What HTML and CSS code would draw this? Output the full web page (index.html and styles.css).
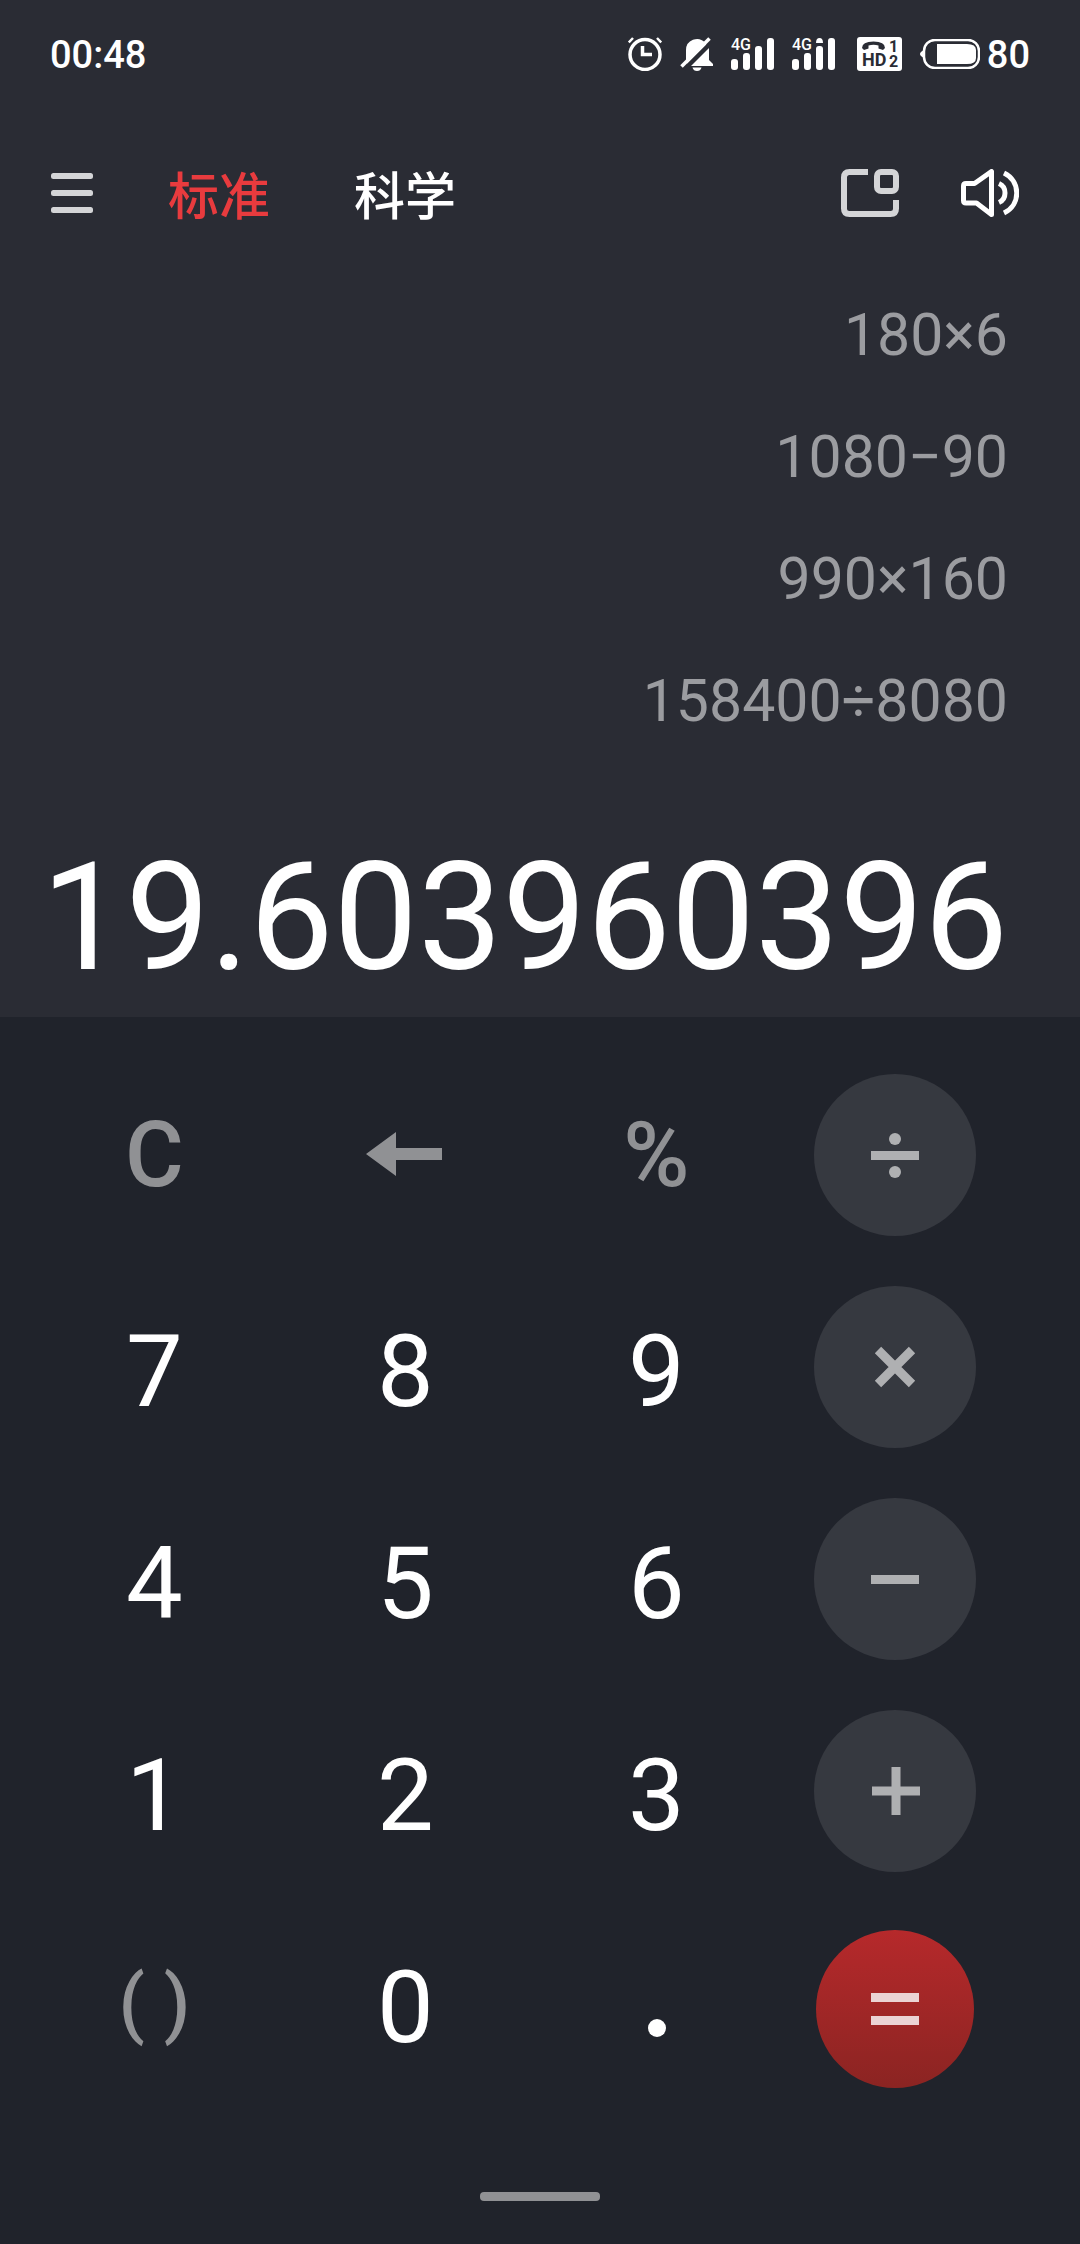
FILE: index.html
```html
<!DOCTYPE html>
<html lang="zh-CN">
<head>
    <meta charset="UTF-8">
    <meta name="viewport" content="width=device-width, initial-scale=1.0">
    <title>计算器</title>
    <link rel="stylesheet" href="styles.css">
</head>
<body>
    <div class="status-bar">
        <time class="clock">00:48</time>
        <div class="status-icons">
            <svg width="34" height="34" viewBox="0 0 34 34" fill="none" stroke="#fff">
                <circle cx="17" cy="17.5" r="15" stroke-width="3.5"/>
                <path d="M14.5 9v8.5H24" stroke-width="3.5"/>
                <path d="M.8 5.5L5 1M33.2 5.5L29 1" stroke-width="2.5"/>
            </svg>
            <svg width="33" height="34" viewBox="0 0 33 34">
                <path d="M6 23V13a11 11 0 0 1 19-7.500l4 6V23l4 4v2H8z" fill="#fff"/>
                <path d="M12.500 30.500h9q-1 3.500-4.500 3.500t-4.500-3.500z" fill="#fff"/>
                <path d="M4 32.800L34 2.800" stroke="#2a2c34" stroke-width="4.500"/>
                <path d="M1.500 29.500L29.500 1.500" stroke="#fff" stroke-width="3.500"/>
            </svg>
            <svg width="43" height="40" viewBox="0 -3 43 40" fill="#fff">
                <text class="net" x="0" y="13">4G</text>
                <rect x="0" y="22" width="7" height="11" rx="3"/>
                <rect x="12" y="16" width="7" height="17" rx="3"/>
                <rect x="24" y="9" width="7" height="24" rx="3"/>
                <rect x="36" y="1" width="7" height="32" rx="3"/>
            </svg>
            <svg width="43" height="40" viewBox="0 -3 43 40" fill="#fff">
                <text class="net" x="0" y="13">4G</text>
                <rect x="0" y="22" width="7" height="11" rx="3"/>
                <rect x="12" y="16" width="7" height="17" rx="3"/>
                <path d="M24 6q0-5 3.500-5t3.500 5z"/>
                <rect x="24" y="9" width="7" height="24" rx="3"/>
                <rect x="36" y="1" width="7" height="32" rx="3"/>
            </svg>
            <svg class="hd" width="45" height="34" viewBox="0 0 45 34">
                <rect width="45" height="34" rx="3" fill="#fff"/>
                <path d="M5 11q0-6.500 11.500-6.500T28 11l-2 2-4.500-1.500V8.500q-5-1.500-10 0v3L7 13z" fill="#2a2c34"/>
                <text class="volte" x="5" y="29">HD</text>
                <text class="sim" x="32" y="15">1</text>
                <text class="sim" x="32" y="30">2</text>
            </svg>
            <div class="battery">
                <svg width="60" height="30" viewBox="0 0 60 30">
                    <path d="M4 11q-4 2-4 4t4 4z" fill="#fff"/>
                    <rect x="4" y="1" width="55" height="28" rx="11" fill="none" stroke="#fff" stroke-width="2.500"/>
                    <path d="M17 5h30q9 0 9 6v8q0 6-9 6H17z" fill="#fff"/>
                </svg>
                <span class="level">80</span>
            </div>
        </div>
    </div>

    <header class="toolbar">
        <button class="icon-btn menu" aria-label="菜单">
            <svg width="42" height="40" viewBox="0 0 42 40" fill="#d4d5d7">
                <rect y="0" width="42" height="6" rx="2.500"/>
                <rect y="17" width="42" height="6" rx="2.500"/>
                <rect y="34" width="42" height="6" rx="2.500"/>
            </svg>
        </button>
        <nav class="tabs">
            <button class="tab active">标准</button>
            <button class="tab">科学</button>
        </nav>
        <div class="actions">
            <button class="icon-btn" aria-label="小窗">
                <svg width="58" height="48" viewBox="0 0 58 48" fill="none" stroke="#d4d5d7" stroke-width="6">
                    <path d="M27 3H8.500Q3 3 3 8.500v31Q3 45 8.500 45h41q5.500 0 5.500-5.500V31"/>
                    <rect x="36" y="3" width="19" height="19" rx="4"/>
                </svg>
            </button>
            <button class="icon-btn" aria-label="声音">
                <svg width="58" height="48" viewBox="0 0 58 48" fill="none" stroke="#fff" stroke-width="5">
                    <path d="M2.500 17q0-2.500 2.500-2.500h8.500L30.500 2.500v43L15.500 34H5q-2.500 0-2.500-2.500z" stroke-linejoin="round"/>
                    <path d="M38 14.500c8 3.500 8 15.500 0 19M43 4c17 8 17 32 0 40"/>
                </svg>
            </button>
        </div>
    </header>

    <main class="calculator">
        <section class="display">
            <ul class="history">
                <li>180×6</li>
                <li>1080−90</li>
                <li>990×160</li>
                <li>158400÷8080</li>
            </ul>
            <output class="result">19.603960396</output>
        </section>

        <section class="keypad">
            <button class="key fn">C</button>
            <button class="key fn" aria-label="退格">
                <svg width="80" height="46" viewBox="0 0 80 46"><path d="M0 22L30 0v16h46v12H30v16z" fill="#909194"/></svg>
            </button>
            <button class="key fn">%</button>
            <button class="key op" aria-label="除">
                <svg width="48" height="48" viewBox="0 0 48 48" fill="#afb0b2">
                    <rect y="20" width="48" height="9"/>
                    <circle cx="24" cy="8" r="6"/>
                    <circle cx="24" cy="41" r="6"/>
                </svg>
            </button>

            <button class="key">7</button>
            <button class="key">8</button>
            <button class="key">9</button>
            <button class="key op" aria-label="乘">
                <svg width="48" height="48" viewBox="0 0 48 48"><path d="M7 7l34 34M41 7L7 41" stroke="#afb0b2" stroke-width="9"/></svg>
            </button>

            <button class="key">4</button>
            <button class="key">5</button>
            <button class="key">6</button>
            <button class="key op" aria-label="减">
                <svg width="48" height="48" viewBox="0 0 48 48"><rect y="20" width="48" height="9" fill="#afb0b2"/></svg>
            </button>

            <button class="key">1</button>
            <button class="key">2</button>
            <button class="key">3</button>
            <button class="key op" aria-label="加">
                <svg width="50" height="48" viewBox="0 0 50 48"><path d="M2 24h48M26 0v48" stroke="#afb0b2" stroke-width="9"/></svg>
            </button>

            <button class="key paren">( )</button>
            <button class="key">0</button>
            <button class="key dot" aria-label="小数点">
                <svg width="18" height="18" viewBox="0 0 18 18"><circle cx="9" cy="9" r="9" fill="#fff"/></svg>
            </button>
            <button class="key op equals" aria-label="等于">
                <svg width="48" height="48" viewBox="0 0 48 48" fill="#ebd3d4">
                    <rect y="8" width="48" height="9"/>
                    <rect y="31" width="48" height="9"/>
                </svg>
            </button>
        </section>
    </main>

    <footer class="home"><span class="home-bar"></span></footer>
</body>
</html>
```

FILE: styles.css
```css
:root {
    --bg: #2a2c34;
    --panel: #20232b;
    --key: #363940;
    --muted: #909194;
    --accent: #e83b3e;
}

* {
    margin: 0;
    padding: 0;
    box-sizing: border-box;
}

body {
    display: flex;
    flex-direction: column;
    min-height: 100vh;
    background-color: var(--panel);
    color: #fff;
    font-family: Roboto, "Noto Sans CJK SC", sans-serif;
}

button {
    border: none;
    background: none;
    color: inherit;
    font-family: inherit;
    cursor: pointer;
}

svg {
    display: block;
    flex-shrink: 0;
}

/* barra de status */
.status-bar {
    display: flex;
    align-items: center;
    justify-content: space-between;
    height: 108px;
    padding: 0 50px;
    background-color: var(--bg);
    font-size: 39px;
    font-weight: 500;
}

.clock,
.level {
    padding-top: 2px;
    font-size: 38px;
}

.status-icons {
    display: flex;
    align-items: center;
    gap: 18px;
}

.battery {
    display: flex;
    align-items: center;
    gap: 7px;
}

.hd {
    margin-left: 4px;
}

.net {
    font-size: 16px;
    font-weight: 500;
}

.volte,
.sim {
    fill: var(--bg);
    font-size: 18px;
    font-weight: 700;
}

.sim {
    font-size: 16px;
}

/* topo */
.toolbar {
    display: flex;
    align-items: center;
    height: 166px;
    padding: 3px 61px 0 51px;
    background-color: var(--bg);
}

.tabs {
    display: flex;
    gap: 84px;
    margin-left: 75px;
}

.tab {
    font-size: 51px;
    font-weight: 500;
}

.tab.active {
    color: var(--accent);
}

.actions {
    display: flex;
    gap: 62px;
    margin-left: auto;
}

/* visor */
.display {
    padding: 0 72px 0 29px;
    background-color: var(--bg);
    text-align: right;
}

.history {
    list-style: none;
    color: #9b9ca0;
    font-size: 59px;
    line-height: 122px;
}

.result {
    display: block;
    padding-top: 57px;
    font-size: 150px;
    line-height: 198px;
}

/* teclado */
.keypad {
    display: grid;
    grid-template-columns: 251fr 251fr 251fr 226fr;
    grid-auto-rows: 212px;
    padding: 32px 72px 0 29px;
}

.key {
    display: flex;
    align-items: center;
    justify-content: center;
    padding-top: 8px;
    font-size: 101px;
}

.fn {
    padding-top: 0;
    color: var(--muted);
    font-size: 90px;
    font-weight: 500;
}

.paren {
    padding-top: 0;
    color: var(--muted);
    font-size: 76px;
    font-weight: 500;
}

.dot {
    padding-top: 50px;
}

.op {
    align-self: center;
    justify-self: center;
    width: 162px;
    height: 162px;
    padding-top: 0;
    border-radius: 50%;
    background-color: var(--key);
}

.equals {
    width: 158px;
    height: 158px;
    margin-top: 12px;
    background: linear-gradient(#b6292b, #8b2422);
}

.home {
    padding: 83px 0 43px;
}

.home-bar {
    display: block;
    width: 120px;
    height: 9px;
    margin: 0 auto;
    border-radius: 4px;
    background-color: var(--muted);
}
```
